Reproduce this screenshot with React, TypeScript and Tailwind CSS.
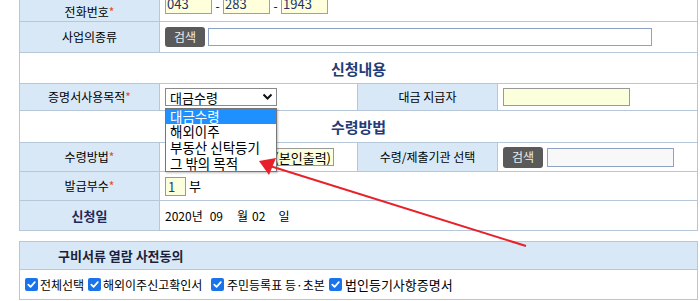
import React from "react";

const Star = () => <span className="text-[#e0501c]">*</span>;

function Label({ children, bold }: { children: React.ReactNode; bold?: boolean }) {
  return (
    <div
      className={`w-[140px] shrink-0 h-full flex items-center justify-center bg-[#d8e8f6] border-r border-[#b5c7d9] ${
        bold ? "font-bold text-[#1b2a5a] text-[13px]" : ""
      }`}
    >
      {children}
    </div>
  );
}

function Check({ className = "" }: { className?: string }) {
  return (
    <span className={`inline-flex w-[13px] h-[13px] rounded-[2px] bg-[#1a73e8] items-center justify-center shrink-0 ${className}`}>
      <svg width="11" height="11" viewBox="0 0 12 12">
        <path d="M2.5 6.2 L5 8.6 L9.6 3.4" fill="none" stroke="white" strokeWidth="1.9" strokeLinecap="round" strokeLinejoin="round" />
      </svg>
    </span>
  );
}

export default function App() {
  return (
    <div className="relative w-[700px] h-[301px] overflow-hidden bg-white text-[12px] leading-none text-black font-['Noto_Sans_CJK_KR','Noto_Sans',sans-serif]">
      {/* Table 1 */}
      <div className="ml-[19px] w-[679px] border-x border-b border-[#b5c7d9]">
        {/* 전화번호 */}
        <div className="h-[22px] flex border-b border-[#b5c7d9]">
          <Label>
            <span className="mt-[2px]">
              전화번호
              <Star />
            </span>
          </Label>
          <div className="flex items-start pl-[5px] -mt-[5px] gap-0">
            <div className="w-[47px] h-[19px] border border-[#8ea2c4] bg-[#ffffdc] text-[#22336b] text-[13px] flex items-end pb-[3px] pl-[1px]">043</div>
            <span className="w-[11px] text-center mt-[5px]">-</span>
            <div className="w-[47px] h-[19px] border border-[#8ea2c4] bg-[#ffffdc] text-[#22336b] text-[13px] flex items-end pb-[3px] pl-[1px]">283</div>
            <span className="w-[11px] text-center mt-[5px]">-</span>
            <div className="w-[47px] h-[19px] border border-[#8ea2c4] bg-[#ffffdc] text-[#22336b] text-[13px] flex items-end pb-[3px] pl-[1px]">1943</div>
          </div>
        </div>
        {/* 사업의종류 */}
        <div className="h-[31px] flex border-b border-[#b5c7d9]">
          <Label>사업의종류</Label>
          <div className="flex items-center pl-[5px] gap-[3px]">
            <div className="w-[40px] h-[20px] rounded-[3px] bg-[#5a5a5a] text-[#eeeeee] flex items-center justify-center">검색</div>
            <div className="w-[444px] h-[18px] border border-[#8ea2c4] bg-white" />
          </div>
        </div>
        {/* 신청내용 */}
        <div className="h-[31px] flex items-center justify-center border-b border-[#b5c7d9] text-[15px] font-bold text-[#1f3d7a]">
          신청내용
        </div>
        {/* 증명서사용목적 */}
        <div className="h-[27px] flex border-b border-[#b5c7d9]">
          <Label>
            <span>
              증명서사용목적
              <Star />
            </span>
          </Label>
          <div className="w-[198px] shrink-0 flex items-center pl-[5px] border-r border-[#b5c7d9]">
            <div className="w-[112px] h-[18px] border border-[#8a8a8a] bg-white flex items-center justify-between pl-[4px] pr-[3px] text-[13px]">
              <span>대금수령</span>
              <svg width="11" height="8" viewBox="0 0 11 8">
                <path d="M1.5 1.5 L5.5 5.5 L9.5 1.5" fill="none" stroke="#111" strokeWidth="2" />
              </svg>
            </div>
          </div>
          <Label>대금 지급자</Label>
          <div className="flex items-center pl-[5px]">
            <div className="w-[127px] h-[18px] border border-[#999999] bg-[#fbffdc]" />
          </div>
        </div>
        {/* 수령방법 header */}
        <div className="h-[32px] flex items-center justify-center border-b border-[#b5c7d9] text-[15px] font-bold text-[#1f3d7a]">
          수령방법
        </div>
        {/* 수령방법 row */}
        <div className="h-[29px] flex border-b border-[#b5c7d9]">
          <Label>
            <span>
              수령방법
              <Star />
            </span>
          </Label>
          <div className="w-[198px] shrink-0 flex items-center pl-[5px] border-r border-[#b5c7d9]">
            <div className="w-[169px] h-[18px] border border-[#999999] bg-[#fbffdc] flex items-center justify-end pr-[2px] text-[13px] overflow-hidden whitespace-nowrap">
              인터넷발급(본인출력)
            </div>
          </div>
          <Label>수령/제출기관 선택</Label>
          <div className="flex items-center pl-[5px] gap-[4px]">
            <div className="w-[40px] h-[21px] rounded-[3px] bg-[#5a5a5a] text-[#eeeeee] flex items-center justify-center">검색</div>
            <div className="w-[127px] h-[19px] border border-[#8ea2c4] bg-[#f8f8f8]" />
          </div>
        </div>
        {/* 발급부수 */}
        <div className="h-[29px] flex border-b border-[#b5c7d9]">
          <Label>
            <span>
              발급부수
              <Star />
            </span>
          </Label>
          <div className="flex items-center pl-[5px] gap-[3px]">
            <div className="w-[21px] h-[19px] border border-[#999999] bg-[#fbffdc] flex items-center pl-[2px] text-[13px] text-[#1a3a8a]">1</div>
            <span className="text-[13px] -mt-[2px]">부</span>
          </div>
        </div>
        {/* 신청일 */}
        <div className="h-[29px] flex">
          <Label bold>신청일</Label>
          <div className="flex items-center pl-[5px] text-[12px]">
            <span>2020년</span>
            <span className="ml-[7px]">09</span>
            <span className="ml-[14px]">월</span>
            <span className="ml-[4px]">02</span>
            <span className="ml-[13px]">일</span>
          </div>
        </div>
      </div>

      {/* Table 2 */}
      <div className="ml-[19px] mt-[10px] w-[679px] border border-[#b5c7d9]">
        <div className="h-[28px] bg-[#d8e8f6] border-b border-[#b5c7d9] flex items-center pl-[38px] font-bold text-[13px] text-[#1b1f3a]">
          구비서류 열람 사전동의
        </div>
        <div className="h-[29px] flex items-center pl-[5px] text-[12px] whitespace-nowrap">
          <Check />
          <span className="ml-[2px] w-[48px]">전체선택</span>
          <Check />
          <span className="ml-[2px] w-[108px]">해외이주신고확인서</span>
          <Check />
          <span className="ml-[3px] w-[102px]">주민등록표 등·초본</span>
          <Check />
          <span className="ml-[3px] text-[13px]">법인등기사항증명서</span>
        </div>
      </div>

      {/* Dropdown listbox overlay */}
      <div className="absolute left-[165px] top-[108px] w-[112px] h-[64px] border border-[#767676] bg-white shadow-[1px_1px_2px_rgba(0,0,0,0.25)] text-[13.5px]">
        <div className="h-[15px] bg-[#1e90ff] text-white flex items-center pl-[4px]">대금수령</div>
        <div className="h-[16px] flex items-center pl-[4px]">해외이주</div>
        <div className="h-[16px] flex items-center pl-[4px]">부동산 신탁등기</div>
        <div className="h-[16px] flex items-center pl-[4px]">그 밖의 목적</div>
      </div>

      {/* Red arrow */}
      <svg className="absolute left-0 top-0 pointer-events-none" width="700" height="301" viewBox="0 0 700 301">
        <line x1="526" y1="246" x2="270" y2="166" stroke="#e8202a" strokeWidth="2" />
        <polygon points="259,161 276,158 269,175" fill="#e8202a" />
      </svg>
    </div>
  );
}
